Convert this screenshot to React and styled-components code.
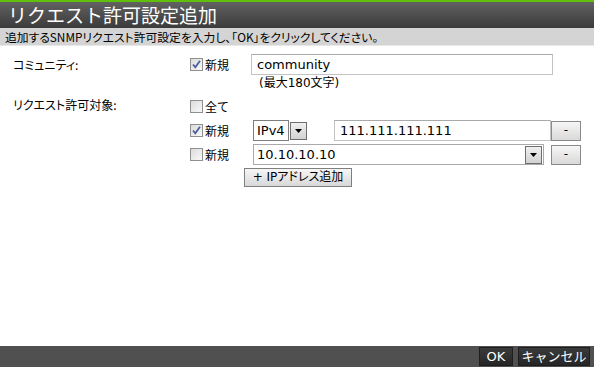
import React from 'react'
import styled, { createGlobalStyle } from 'styled-components'

const GlobalStyle = createGlobalStyle`
	html, body {
		margin: 0;
		padding: 0;
		background: #ffffff;
	}
	body {
		font-family: "DejaVu Sans", "Noto Sans CJK JP", sans-serif;
		font-size: 12px;
		color: #000;
	}
	* {
		box-sizing: border-box;
	}
`

const Check = ({ checked }) => (
	<CheckBox>
		{checked && (
			<svg width="11" height="11" viewBox="0 0 11 11">
				<path d="M2 5.5 L4.3 8.3 L9 1.8" fill="none" stroke="#4b5fa0" strokeWidth="1.8" />
			</svg>
		)}
	</CheckBox>
)

const Arrow = () => (
	<svg width="7" height="4" viewBox="0 0 7 4">
		<path d="M0 0 H7 L3.5 4 Z" fill="#000" />
	</svg>
)

export default function App () {
	return (
		<Page>
			<GlobalStyle />
			<TitleBar>リクエスト許可設定追加</TitleBar>
			<Description>追加するSNMPリクエスト許可設定を入力し、「OK」をクリックしてください。</Description>
			<Form>
				<Row $top={8}>
					<Label $offset={4}>コミュニティ:</Label>
					<div>
						<Line>
							<CheckLabel><Check checked />新規</CheckLabel>
							<TextInput $width={302}>community</TextInput>
						</Line>
						<Hint>(最大180文字)</Hint>
					</div>
				</Row>
				<Row $top={6}>
					<Label $offset={2}>リクエスト許可対象:</Label>
					<Stack>
						<CheckLabel><Check />全て</CheckLabel>
						<Line>
							<CheckLabel><Check checked />新規</CheckLabel>
							<Select>
								<SelectValue>IPv4</SelectValue>
								<ArrowButton><Arrow /></ArrowButton>
							</Select>
							<TextInput $width={217} $gap={27}>111.111.111.111</TextInput>
							<SmallButton>-</SmallButton>
						</Line>
						<Line>
							<CheckLabel><Check />新規</CheckLabel>
							<Combo>
								<ComboValue>10.10.10.10</ComboValue>
								<ArrowButton><Arrow /></ArrowButton>
							</Combo>
							<SmallButton>-</SmallButton>
						</Line>
						<AddButton>+ IPアドレス追加</AddButton>
					</Stack>
				</Row>
			</Form>
			<Footer>
				<FooterButton $width={34}>OK</FooterButton>
				<FooterButton $width={72}>キャンセル</FooterButton>
			</Footer>
		</Page>
	)
}

const Page = styled.div`
	height: 367px;
	display: flex;
	flex-direction: column;
	overflow: hidden;
`

const TitleBar = styled.div`
	height: 28px;
	border-top: 2px solid #5fbf0a;
	background: linear-gradient(#616161, #3b3b3b);
	color: #fff;
	font-family: "Noto Sans CJK JP", sans-serif;
	font-size: 19px;
	line-height: 26px;
	padding-left: 8px;
	white-space: nowrap;
`

const Description = styled.div`
	height: 18px;
	background: #d4d4d4;
	border-bottom: 1px solid #e8e8e8;
	font-family: "Noto Sans CJK JP", sans-serif;
	font-size: 11.8px;
	line-height: 17px;
	padding-left: 5px;
	font-feature-settings: "palt";
	white-space: nowrap;
`

const Form = styled.div`
	flex: 1;
	padding-left: 13px;
`

const Row = styled.div`
	display: flex;
	margin-top: ${p => p.$top}px;
`

const Label = styled.div`
	width: 177px;
	padding-top: ${p => p.$offset}px;
	font-family: "Noto Sans CJK JP", sans-serif;
	font-feature-settings: "palt";
	line-height: 14px;
`

const Stack = styled.div`
	display: flex;
	flex-direction: column;
	gap: 3px;
`

const Line = styled.div`
	display: flex;
	align-items: center;
`

const CheckLabel = styled.label`
	display: flex;
	align-items: center;
	gap: 2px;
	width: 61px;
	height: 21px;
	font-family: "Noto Sans CJK JP", sans-serif;
`

const CheckBox = styled.span`
	width: 13px;
	height: 13px;
	border: 1px solid #8e8f8f;
	background: linear-gradient(135deg, #dcdcdc, #f8f8f8);
	display: inline-flex;
	align-items: center;
	justify-content: center;
`

const TextInput = styled.div`
	width: ${p => p.$width}px;
	height: 21px;
	margin-left: ${p => p.$gap || 0}px;
	border: 1px solid #c3c3c3;
	border-top-color: #aaaaaa;
	background: #fff;
	padding: 0 5px;
	font-size: 13px;
	line-height: 19px;
`

const Hint = styled.div`
	margin-left: 69px;
	margin-top: 1px;
	font-size: 12px;
	line-height: 14px;
	font-family: "DejaVu Sans", "Noto Sans CJK JP", sans-serif;
`

const Select = styled.div`
	display: flex;
	margin-left: 2px;
	height: 21px;
	gap: 1px;
	align-items: center;
`

const SelectValue = styled.div`
	width: 36px;
	height: 21px;
	border: 1px solid #7e7e7e;
	background: #fff;
	padding-left: 3px;
	font-size: 13px;
	line-height: 19px;
`

const ArrowButton = styled.div`
	width: 17px;
	height: 18px;
	border: 1px solid #6f6f6f;
	background: linear-gradient(#f0f0f0, #d2d2d2);
	display: flex;
	align-items: center;
	justify-content: center;
`

const Combo = styled.div`
	display: flex;
	align-items: center;
	justify-content: space-between;
	margin-left: 2px;
	width: 291px;
	height: 21px;
	border: 1px solid #aaaaaa;
	background: #fff;
	padding: 0 1px 0 3px;
`

const ComboValue = styled.div`
	font-size: 13px;
	line-height: 19px;
`

const SmallButton = styled.div`
	width: 30px;
	height: 20px;
	margin-left: auto;
	border: 1px solid #8a8a8a;
	background: linear-gradient(#f6f6f6, #d9d9d9);
	text-align: center;
	line-height: 16px;
	font-size: 12px;
`

const AddButton = styled.div`
	align-self: flex-start;
	margin-left: 54px;
	width: 108px;
	height: 19px;
	border: 1px solid #7f7f7f;
	background: linear-gradient(#f6f6f6, #d8d8d8);
	font-family: "DejaVu Sans", "Noto Sans CJK JP", sans-serif;
	font-feature-settings: "palt";
	text-align: center;
	line-height: 17px;
	font-size: 12px;
`

const Footer = styled.div`
	height: 21px;
	background: #505050;
	display: flex;
	justify-content: flex-end;
	align-items: center;
	gap: 5px;
	padding-right: 4px;
`

const FooterButton = styled.div`
	width: ${p => p.$width}px;
	height: 19px;
	background: linear-gradient(#3a3a3a, #262626);
	border: 1px solid #1e1e1e;
	color: #fff;
	text-align: center;
	font-family: "DejaVu Sans", "Noto Sans CJK JP", sans-serif;
	font-size: 13px;
	line-height: 17px;
`
